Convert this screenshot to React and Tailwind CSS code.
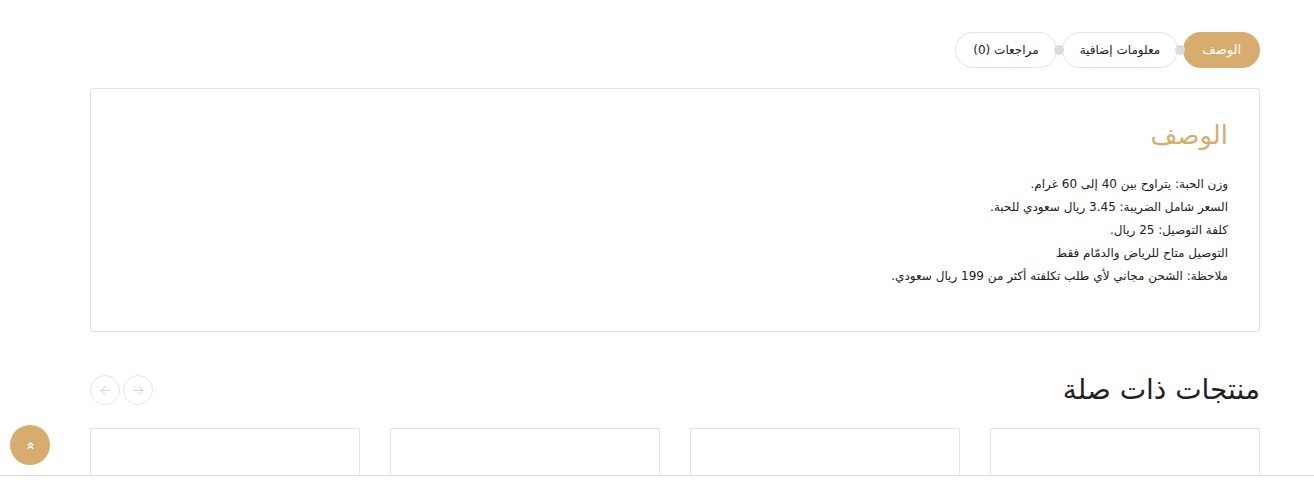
import { ArrowLeft, ArrowRight, ChevronsUp } from 'lucide-react';

const lines = [
  'وزن الحبة: يتراوح بين 40 إلى 60 غرام.',
  'السعر شامل الضريبة: 3.45 ريال سعودي للحبة.',
  'كلفة التوصيل: 25 ريال.',
  'التوصيل متاح للرياض والدمّام فقط',
  'ملاحظة: الشحن مجاني لأي طلب تكلفته أكثر من 199 ريال سعودي.',
];

const tabs = [
  { label: 'الوصف', active: true },
  { label: 'معلومات إضافية' },
  { label: 'مراجعات (0)' },
];

export default function App() {
  return (
    <div
      dir="rtl"
      className="relative h-[483px] overflow-hidden bg-white text-[#222]"
      style={{ fontFamily: '"DejaVu Sans", "Noto Sans", sans-serif' }}
    >
      <div className="mr-[54px] w-[1170px] pt-[32px]">
        {/* tabs */}
        <div className="flex gap-[5px]">
          {tabs.map((t, i) => (
            <div key={t.label} className="relative">
              <div
                className={
                  t.active
                    ? 'flex h-[36px] items-center rounded-full bg-[#d6ad6e] px-[19px] text-[13px] text-white'
                    : 'flex h-[36px] items-center rounded-full border border-[#e3e3e3] px-[17px] text-[12px] text-[#222]'
                }
              >
                {t.label}
              </div>
              {i < tabs.length - 1 && (
                <span className="absolute -left-[8px] top-[13px] z-10 h-[10px] w-[10px] rounded-full bg-[#dcdcdc]" />
              )}
            </div>
          ))}
        </div>

        {/* description box */}
        <div className="mt-[20px] h-[244px] rounded-[3px] border border-[#e1e1e1] px-[31px] pt-[30px]">
          <h2 className="text-[26px] leading-[32px] text-[#d6ad6e]">الوصف</h2>
          <div className="mt-[22px] text-[12px] leading-[23px] text-[#222]">
            {lines.map(l => (
              <p key={l}>{l}</p>
            ))}
          </div>
        </div>

        {/* related */}
        <div className="mt-[40px] flex items-center justify-between">
          <h2 className="text-[28px] leading-[36px] text-[#222]">منتجات ذات صلة</h2>
          <div className="flex gap-[3px]">
            <button className="flex h-[30px] w-[30px] items-center justify-center rounded-full border border-[#e6e6e6] text-[#c4c4c4]">
              <ArrowRight className="h-[15px] w-[15px]" strokeWidth={1.2} />
            </button>
            <button className="flex h-[30px] w-[30px] items-center justify-center rounded-full border border-[#e6e6e6] text-[#c4c4c4]">
              <ArrowLeft className="h-[15px] w-[15px]" strokeWidth={1.2} />
            </button>
          </div>
        </div>

        <div className="mt-[20px] grid grid-cols-4 gap-[30px]">
          {[0, 1, 2, 3].map(i => (
            <div key={i} className="h-[80px] border border-[#e3e3e3] bg-white" />
          ))}
        </div>
      </div>

      {/* bottom bar */}
      <div className="absolute bottom-0 left-0 right-0 h-[8px] border-t border-[#dedede] bg-white" />

      {/* scroll to top */}
      <button className="absolute left-[10px] top-[425px] flex h-[40px] w-[40px] items-center justify-center rounded-full bg-[#d6ad6e] text-white">
        <ChevronsUp className="h-[11px] w-[11px]" strokeWidth={3} />
      </button>
    </div>
  );
}
